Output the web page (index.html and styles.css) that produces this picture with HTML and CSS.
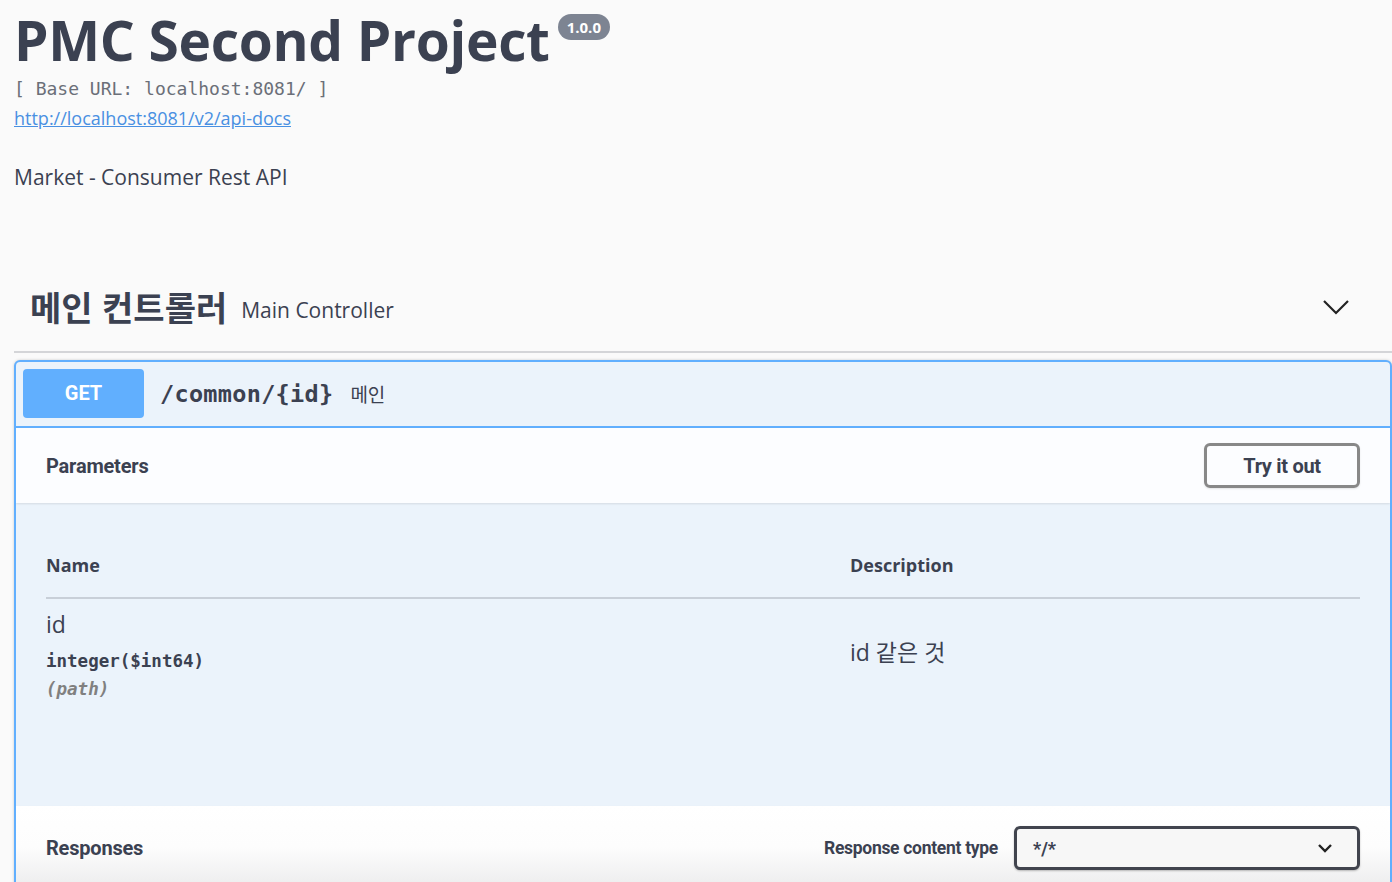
FILE: index.html
```html
<!DOCTYPE html>
<html lang="ko">
<head>
    <meta charset="UTF-8">
    <title>Swagger UI</title>
    <link rel="stylesheet" href="styles.css">
</head>
<body>
<div class="wrapper">
    <div class="info">
        <h2 class="title">PMC Second Project<span class="version">1.0.0</span></h2>
        <pre class="base-url">[ Base URL: localhost:8081/ ]</pre>
        <a class="spec-link" href="#">http://localhost:8081/v2/api-docs</a>
        <div class="description">Market - Consumer Rest API</div>
    </div>

    <div class="tag-section">
        <h4 class="tag">
            <span class="tag-name">메인 컨트롤러</span>
            <span class="tag-desc">Main Controller</span>
            <svg class="tag-arrow" width="28" height="18" viewBox="0 0 28 18">
                <path d="M2 3 L14 15 L26 3" fill="none" stroke="#222" stroke-width="2.2"/>
            </svg>
        </h4>

        <div class="opblock">
            <div class="summary">
                <span class="method">GET</span>
                <span class="path">/common/{id}</span>
                <span class="summary-desc">메인</span>
            </div>

            <div class="section-header">
                <h4>Parameters</h4>
                <button type="button" class="try-out">Try it out</button>
            </div>

            <div class="params">
                <div class="params-head">
                    <div>Name</div>
                    <div>Description</div>
                </div>
                <div class="params-row">
                    <div class="param-name">
                        <div class="param-id">id</div>
                        <div class="param-type">integer<span class="param-format">($int64)</span></div>
                        <div class="param-in">(path)</div>
                    </div>
                    <div class="param-desc">id 같은 것</div>
                </div>
            </div>

            <div class="section-header responses">
                <h4>Responses</h4>
                <div class="content-type">
                    <span class="content-label">Response content type</span>
                    <div class="select">
                        <span>*/*</span>
                        <svg width="16" height="10" viewBox="0 0 16 10">
                            <path d="M2 2 L8 8 L14 2" fill="none" stroke="#222" stroke-width="2.4"/>
                        </svg>
                    </div>
                </div>
            </div>
        </div>
    </div>
</div>
</body>
</html>
```

FILE: styles.css
```css
* {
    box-sizing: border-box;
}
html, body {
    margin: 0;
    padding: 0;
    height: 882px;
    overflow: hidden;
}
body {
    background-color: #fafafa;
    color: #3b4151;
    font-family: "Open Sans", "Noto Sans CJK KR", sans-serif;
}
.wrapper {
    padding: 0 0 0 14px;
}
.info {
    padding-top: 8px;
}
.title {
    margin: 0;
    font-size: 55px;
    line-height: 64px;
    font-weight: 700;
    letter-spacing: -0.3px;
}
.version {
    display: inline-block;
    vertical-align: top;
    margin: 6px 0 0 8px;
    padding: 3px 9px;
    border-radius: 14px;
    background-color: #7d8492;
    color: white;
    font-size: 15px;
    line-height: 20px;
    letter-spacing: 0;
}
.base-url {
    margin: 6px 0 0 0;
    font-family: "DejaVu Sans Mono", monospace;
    font-size: 18px;
    line-height: 22px;
    font-weight: 300;
    color: #6b6f78;
}
.spec-link {
    display: inline-block;
    margin-top: 6px;
    font-size: 18px;
    line-height: 24px;
    color: #4990e2;
}
.description {
    margin-top: 32px;
    font-size: 21px;
    line-height: 30px;
}

.tag-section {
    margin-top: 92px;
}
.tag {
    display: flex;
    align-items: center;
    margin: 0;
    padding: 0 42px 21px 16px;
    border-bottom: 2px solid rgba(59, 65, 81, 0.2);
}
.tag-name {
    font-family: "Noto Sans CJK KR", sans-serif;
    font-size: 34px;
    font-weight: 700;
    line-height: 46px;
}
.tag-desc {
    margin-left: 14px;
    font-size: 21px;
    font-weight: 400;
    flex: 1;
    padding-top: 6px;
}

.opblock {
    margin-top: 7px;
    border: 2px solid #61affe;
    border-radius: 6px;
    background-color: #ebf3fb;
    box-shadow: 0 0 3px rgba(0, 0, 0, 0.19);
    overflow: hidden;
}
.summary {
    display: flex;
    align-items: center;
    padding: 7px 7px 8px 7px;
    border-bottom: 2px solid #61affe;
}
.method {
    width: 121px;
    height: 49px;
    line-height: 49px;
    border-radius: 4px;
    background-color: #61affe;
    color: white;
    text-align: center;
    font-family: Roboto, sans-serif;
    font-weight: 700;
    font-size: 20px;
}
.path {
    margin-left: 16px;
    font-family: "DejaVu Sans Mono", monospace;
    font-size: 23.5px;
    font-weight: 600;
    letter-spacing: 0.3px;
}
.summary-desc {
    margin-left: 17px;
    font-family: "Noto Sans CJK KR", sans-serif;
    font-size: 19px;
}

.section-header {
    display: flex;
    align-items: center;
    justify-content: space-between;
    height: 75px;
    padding: 0 30px;
    background-color: rgba(255, 255, 255, 0.82);
    box-shadow: 0 1px 2px rgba(0, 0, 0, 0.1);
}
.section-header h4 {
    margin: 0;
    font-family: Roboto, sans-serif;
    font-size: 20px;
    font-weight: 700;
    letter-spacing: -0.2px;
}
.try-out {
    width: 156px;
    height: 45px;
    border: 3px solid #888;
    border-radius: 6px;
    background-color: transparent;
    color: #3b4151;
    font-family: Roboto, sans-serif;
    font-size: 20px;
    font-weight: 700;
    letter-spacing: -0.3px;
    box-shadow: 0 1px 2px rgba(0, 0, 0, 0.1);
}

.params {
    height: 303px;
    padding: 50px 30px 0 30px;
}
.params-head, .params-row {
    display: grid;
    grid-template-columns: 804px 1fr;
}
.params-head {
    padding-bottom: 20px;
    border-bottom: 2px solid rgba(59, 65, 81, 0.2);
    font-size: 18px;
    font-weight: 700;
}
.params-row {
    padding-top: 9px;
}
.param-id {
    font-size: 23px;
    line-height: 32px;
}
.param-type {
    margin-top: 8px;
    font-family: "DejaVu Sans Mono", monospace;
    font-size: 17.5px;
    font-weight: 700;
    line-height: 26px;
}
.param-format {
    font-weight: 600;
}
.param-in {
    margin-top: 5px;
    font-family: "DejaVu Sans Mono", monospace;
    font-size: 17.5px;
    font-style: italic;
    font-weight: 600;
    color: #808080;
}
.param-desc {
    padding-top: 26px;
    font-size: 23px;
}

.responses {
    height: 90px;
    padding-bottom: 6px;
    background: linear-gradient(to bottom, #ffffff 0%, #fdfdfd 45%, #e9e9ea 100%);
}
.content-type {
    display: flex;
    align-items: center;
}
.content-label {
    margin-right: 16px;
    font-family: Roboto, sans-serif;
    font-size: 17.5px;
    font-weight: 700;
    letter-spacing: -0.3px;
}
.select {
    display: flex;
    align-items: center;
    justify-content: space-between;
    width: 346px;
    height: 44px;
    padding: 0 24px 0 16px;
    border: 3px solid #41444e;
    border-radius: 6px;
    background-color: #f7f7f7;
    font-family: Roboto, sans-serif;
    font-weight: 700;
    font-size: 18px;
    box-shadow: 0 1px 2px rgba(0, 0, 0, 0.25);
}
```
